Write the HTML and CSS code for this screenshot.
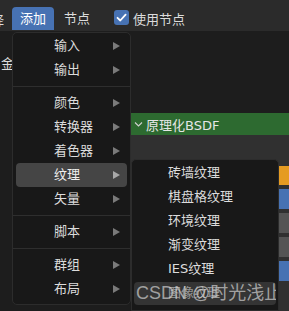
FILE: index.html
```html
<!DOCTYPE html>
<html lang="zh">
<head>
    <meta charset="UTF-8">
    <title>添加菜单</title>
    <link rel="stylesheet" href="styles.css">
</head>
<body>

    <!-- Header Bar -->
    <header class="header">
        <span class="cut-label">择</span>
        <span class="menu-btn active">添加</span>
        <span class="menu-btn">节点</span>
        <span class="check"><svg width="11" height="11" viewBox="0 0 11 11"><path d="M1.5 5.8 L4.3 8.5 L9.6 2.6" fill="none" stroke="#fff" stroke-width="1.8" stroke-linecap="round" stroke-linejoin="round"/></svg></span>
        <span class="check-label">使用节点</span>
    </header>

    <!-- Node canvas -->
    <div class="canvas">
        <span class="side-label">金</span>
        <div class="node">
            <div class="node-head">
                <svg class="fold" width="15" height="22" viewBox="0 0 15 22"><path d="M4 9.5 L7.5 13 L11 9.5" fill="none" stroke="#d0d0d0" stroke-width="1.1"/></svg>
                <span>原理化BSDF</span>
            </div>
            <div class="node-body">
                <div class="field orange"></div>
                <div class="field blue"></div>
                <div class="field grey"></div>
                <div class="field grey"></div>
                <div class="field blue"></div>
            </div>
        </div>
    </div>

    <!-- Add Menu -->
    <div class="popup main-menu">
        <div class="item">输入<i class="arrow"></i></div>
        <div class="item">输出<i class="arrow"></i></div>
        <div class="sep"></div>
        <div class="item">颜色<i class="arrow"></i></div>
        <div class="item">转换器<i class="arrow"></i></div>
        <div class="item">着色器<i class="arrow"></i></div>
        <div class="item hover">纹理<i class="arrow"></i></div>
        <div class="item">矢量<i class="arrow"></i></div>
        <div class="sep"></div>
        <div class="item">脚本<i class="arrow"></i></div>
        <div class="sep"></div>
        <div class="item">群组<i class="arrow"></i></div>
        <div class="item">布局<i class="arrow"></i></div>
    </div>

    <!-- Texture Submenu -->
    <div class="popup sub-menu">
        <div class="item">砖墙纹理</div>
        <div class="item">棋盘格纹理</div>
        <div class="item">环境纹理</div>
        <div class="item">渐变纹理</div>
        <div class="item">IES纹理</div>
        <div class="item">图像纹理</div>
        <div class="item">魔术纹理</div>
    </div>

    <div class="watermark">CSDN @时光浅止</div>

</body>
</html>
```

FILE: styles.css
```css
/* Basic Styles */
html {
    overflow: hidden;
}
body {
    margin: 0;
    width: 289px;
    height: 311px;
    overflow: hidden;
    position: relative;
    background-color: #1d1d1d;
    color: #dcdcdc;
    font-family: 'DejaVu Sans', 'Noto Sans CJK SC', sans-serif;
    font-size: 13px;
}

/* Header */
.header {
    height: 31px;
    background-color: #2b2b2b;
    display: flex;
    align-items: center;
    padding-left: 12px;
    box-sizing: border-box;
    position: relative;
}
.cut-label {
    position: absolute;
    left: -9px;
    top: 10px;
}
.menu-btn {
    height: 23px;
    line-height: 23px;
    padding: 0 8px;
    margin-top: 6px;
    margin-right: 2px;
    border-radius: 4px 4px 0 0;
}
.menu-btn.active {
    background-color: #4772b3;
    color: #fff;
    margin-right: 2px;
}
.check {
    width: 15px;
    height: 15px;
    margin: 4px 4px 0 14px;
    border-radius: 3px;
    background-color: #4772b3;
    display: flex;
    align-items: center;
    justify-content: center;
}
.check-label {
    margin-top: 6px;
}

/* Canvas */
.canvas {
    height: 280px;
    position: relative;
}
.side-label {
    position: absolute;
    left: 1px;
    top: 22px;
}
.node {
    position: absolute;
    left: 131px;
    top: 82px;
    width: 170px;
    height: 200px;
    background-color: #303030;
}
.node-head {
    height: 22px;
    background-color: #2d6a30;
    color: #e6e6e6;
    display: flex;
    align-items: center;
}
.node-body {
    padding: 31px 0 0 10px;
    display: flex;
    flex-direction: column;
    gap: 4px;
}
.field {
    height: 20px;
    border-radius: 3px;
}
.field.orange { background-color: #e59b22; height: 19px; }
.field.blue { background-color: #4772b3; }
.field.grey { background-color: #545454; }

/* Popup menus */
.popup {
    position: absolute;
    background-color: #181818;
    border: 1px solid #2c2c2c;
    border-radius: 5px;
    box-sizing: border-box;
    padding: 1px 0 3px;
}
.main-menu {
    left: 12px;
    top: 32px;
    width: 119px;
}
.sub-menu {
    left: 131px;
    top: 159px;
    width: 148px;
    height: 152px;
    overflow: hidden;
    border-bottom-left-radius: 0;
    border-bottom-right-radius: 0;
}
.item {
    height: 24px;
    line-height: 24px;
    padding-left: 38px;
    margin: 0 3px;
    border-radius: 4px;
    position: relative;
}
.sub-menu .item {
    padding-left: 33px;
}
.item.hover {
    background-color: #454545;
    color: #f0f0f0;
}
.arrow {
    position: absolute;
    right: 7px;
    top: 8px;
    width: 0;
    height: 0;
    border-top: 4px solid transparent;
    border-bottom: 4px solid transparent;
    border-left: 7px solid #7a7a7a;
}
.hover .arrow {
    border-left-color: #a8a8a8;
}
.sep {
    height: 1px;
    background-color: #2e2e2e;
    margin: 4px 0 4px;
}

/* Watermark */
.watermark {
    position: absolute;
    left: 134px;
    top: 282px;
    width: 142px;
    height: 23px;
    line-height: 23px;
    box-sizing: border-box;
    padding-left: 2px;
    border-radius: 4px;
    background-color: rgba(80, 80, 80, 0.5);
    color: rgba(210, 210, 210, 0.7);
    font-family: 'Liberation Sans', 'Noto Sans CJK SC', sans-serif;
    font-size: 18px;
    white-space: nowrap;
    overflow: hidden;
}
```
